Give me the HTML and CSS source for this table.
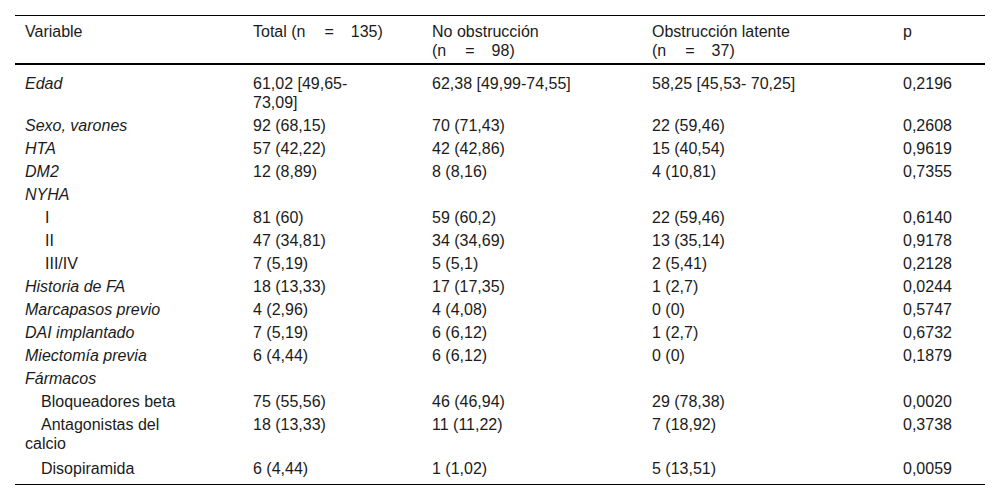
FILE: index.html
```html
<!DOCTYPE html>
<html lang="es">
<head>
<meta charset="utf-8">
<title>Tabla</title>
<link rel="stylesheet" href="styles.css">
</head>
<body>
<table class="data">
  <colgroup>
    <col class="c1"><col class="c2"><col class="c3"><col class="c4"><col class="c5">
  </colgroup>
  <thead>
    <tr>
      <th>Variable</th>
      <th>Total (n<span class="eq">=</span>135)</th>
      <th>No obstrucción<br>(n<span class="eq">=</span>98)</th>
      <th>Obstrucción latente<br>(n<span class="eq">=</span>37)</th>
      <th>p</th>
    </tr>
  </thead>
  <tbody>
    <tr class="first"><td><em>Edad</em></td><td>61,02 [49,65-<br>73,09]</td><td>62,38 [49,99-74,55]</td><td>58,25 [45,53- 70,25]</td><td>0,2196</td></tr>
    <tr><td><em>Sexo, varones</em></td><td>92 (68,15)</td><td>70 (71,43)</td><td>22 (59,46)</td><td>0,2608</td></tr>
    <tr><td><em>HTA</em></td><td>57 (42,22)</td><td>42 (42,86)</td><td>15 (40,54)</td><td>0,9619</td></tr>
    <tr><td><em>DM2</em></td><td>12 (8,89)</td><td>8 (8,16)</td><td>4 (10,81)</td><td>0,7355</td></tr>
    <tr><td><em>NYHA</em></td><td></td><td></td><td></td><td></td></tr>
    <tr><td class="sub">I</td><td>81 (60)</td><td>59 (60,2)</td><td>22 (59,46)</td><td>0,6140</td></tr>
    <tr><td class="sub">II</td><td>47 (34,81)</td><td>34 (34,69)</td><td>13 (35,14)</td><td>0,9178</td></tr>
    <tr><td class="sub">III/IV</td><td>7 (5,19)</td><td>5 (5,1)</td><td>2 (5,41)</td><td>0,2128</td></tr>
    <tr><td><em>Historia de FA</em></td><td>18 (13,33)</td><td>17 (17,35)</td><td>1 (2,7)</td><td>0,0244</td></tr>
    <tr><td><em>Marcapasos previo</em></td><td>4 (2,96)</td><td>4 (4,08)</td><td>0 (0)</td><td>0,5747</td></tr>
    <tr><td><em>DAI implantado</em></td><td>7 (5,19)</td><td>6 (6,12)</td><td>1 (2,7)</td><td>0,6732</td></tr>
    <tr><td><em>Miectomía previa</em></td><td>6 (4,44)</td><td>6 (6,12)</td><td>0 (0)</td><td>0,1879</td></tr>
    <tr><td><em>Fármacos</em></td><td></td><td></td><td></td><td></td></tr>
    <tr><td class="sub2">Bloqueadores beta</td><td>75 (55,56)</td><td>46 (46,94)</td><td>29 (78,38)</td><td>0,0020</td></tr>
    <tr><td class="sub2">Antagonistas del<br>calcio</td><td>18 (13,33)</td><td>11 (11,22)</td><td>7 (18,92)</td><td>0,3738</td></tr>
    <tr class="last"><td class="sub2">Disopiramida</td><td>6 (4,44)</td><td>1 (1,02)</td><td>5 (13,51)</td><td>0,0059</td></tr>
  </tbody>
</table>
</body>
</html>
```

FILE: styles.css
```css
html, body {
  margin: 0;
  padding: 0;
  background: #fff;
}

body {
  font-family: "Liberation Sans", Arial, sans-serif;
  font-size: 16px;
  line-height: 19px;
  color: #1b1b1b;
}

.data {
  margin: 15px 0 0 15px;
  width: 970px;
  border-collapse: collapse;
  table-layout: fixed;
  border-top: 1px solid #000;
  border-bottom: 1px solid #000;
}

.c1 { width: 228px; }
.c2 { width: 179px; }
.c3 { width: 220px; }
.c4 { width: 251px; }
.c5 { width: 92px; }

.data th,
.data td {
  text-align: left;
  vertical-align: top;
  white-space: nowrap;
  padding: 2px 10px;
}

.data th {
  font-weight: normal;
  padding-top: 6px;
  padding-bottom: 3px;
  height: 38px;
  border-bottom: 2px solid #000;
}

.data tr.first td {
  padding-top: 9px;
}

.data tr.last td {
  padding-top: 4px;
  padding-bottom: 6px;
}

.data em {
  font-style: italic;
}

.data td.sub {
  text-indent: 20px;
}

.data td.sub2 {
  text-indent: 16px;
}

.eq {
  display: inline-block;
  margin: 0 17px 0 19px;
}
```
